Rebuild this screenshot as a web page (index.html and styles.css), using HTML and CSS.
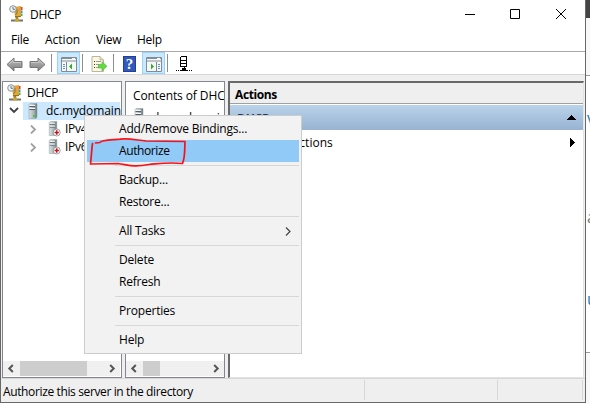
FILE: index.html
```html
<!DOCTYPE html>
<html lang="en">
<head>
<meta charset="utf-8">
<title>DHCP</title>
<link rel="stylesheet" href="styles.css">
</head>
<body>
<svg class="defs" width="0" height="0">
  <defs>
    <linearGradient id="metal" x1="0" x2="1"><stop offset="0" stop-color="#dce3e3"/><stop offset=".6" stop-color="#a9b4b4"/><stop offset="1" stop-color="#66777b"/></linearGradient>
    <linearGradient id="arrow" x1="0" y1="0" x2="0" y2="1"><stop offset="0" stop-color="#bcbcbc"/><stop offset="1" stop-color="#808080"/></linearGradient>
    <symbol id="server" viewBox="0 0 10 16">
      <path d="M1 1.5 2 .5H9V14L8 15.5H1z" fill="url(#metal)" stroke="#8d999b" stroke-width=".5"/>
      <path d="M1.5 3.5H7M1.5 6.5H7" stroke="#536065"/><path d="M1.5 2.5H7M1.5 5.5H7" stroke="#f5f8f8"/>
      <rect x="5" y="12" width="2" height="2" fill="#40cf28"/>
    </symbol>
    <symbol id="dhcp" viewBox="0 0 16 17">
      <path d="M8 12V15M2 15.5H14" stroke="#6c777c" stroke-width="2"/><rect x="6" y="13.5" width="4" height="3" fill="#d7a21b"/>
      <path d="M5 2 12 1V12L6 12.5z" class="book"/><path d="M6 11H12V12L6 12.5z" fill="#947423"/><path d="M8 4V7.5L6.5 10" stroke="#8b7421" fill="none"/>
      <path d="M12.7 2V5" stroke="#e33c2b" stroke-width="1.6"/><path d="M12.7 5.5V8" stroke="#3a94cd" stroke-width="1.6"/><path d="M12.7 8.5V11" stroke="#4baa43" stroke-width="1.6"/>
      <circle cx="4" cy="4" r="3.3" fill="#eef1f2" stroke="#899398"/><path d="M4 2V4.3H6" fill="none" stroke="#505b61" stroke-width=".8"/>
    </symbol>
    <symbol id="back" viewBox="0 0 17 15"><path d="M1 7.5 8 1V4.5H16V10.5H8V14z" fill="url(#arrow)" stroke="#777"/><path d="M3 7.2 7 3.5V5.5H15" fill="none" stroke="#d0d0d0" stroke-width=".8"/></symbol>
    <symbol id="left" viewBox="0 0 8 9"><path d="M5.8 1 2.3 4.5 5.8 8" fill="none" stroke="#555" stroke-width="2"/></symbol>
    <symbol id="right" viewBox="0 0 8 9"><path d="M2.2 1 5.7 4.5 2.2 8" fill="none" stroke="#555" stroke-width="2"/></symbol>
    <symbol id="declined" viewBox="0 0 13 16"><use href="#server" width="10" height="15"/><circle cx="8.7" cy="11.5" r="3.5" fill="#fff" stroke="#888" stroke-width=".8"/><path d="M8.7 9.3V13.7M6.5 11.5H10.9" stroke="#c01824" stroke-width="1.6"/></symbol>
  </defs>
</svg>
<div class="desktop">
  <main class="window">
    <header class="titlebar">
      <svg class="app-icon" width="16" height="17"><use href="#dhcp"/></svg><span>DHCP</span>
      <svg class="controls" width="104" height="12" fill="none" stroke="#000"><path d="M1 6.5H11"/><path d="M46.5 1.5H55.5V10.5H46.5z"/><path d="M92 1 102 11M102 1 92 11"/></svg>
    </header>
    <nav class="menubar"><span class="m-file">File</span><span class="m-action">Action</span><span class="m-view">View</span><span class="m-help">Help</span></nav>
    <div class="toolbar">
      <svg class="back" width="17" height="15"><use href="#back"/></svg>
      <svg class="forward" width="17" height="15"><use href="#back"/></svg>
      <i class="divider d1"></i>
      <span class="tool selected"><svg width="16" height="15"><path d="M.5 .5H15.5V14.5H.5z" fill="#f5f7f8" stroke="#818d94"/><path d="M1 1.5H15M1 4H15" stroke="#849096"/><path d="M11 1.5H14" stroke="#fff"/><path d="M5.5 5V14" stroke="#7d8b92"/><path d="M2 7.5H4M2 9.5H4M2 11.5H4" stroke="#6494b8"/><path d="M11 6.5V12.5L8 9.5z" fill="#2fae23"/></svg></span>
      <i class="divider d2"></i>
      <svg class="export" width="17" height="16"><path d="M1 .5H9L12.5 4V15.5H1z" fill="#fcf7df" stroke="#bdb69e"/><path d="M9 .5V4H12.5" fill="#e8dfbd" stroke="#aaa38b" stroke-width=".7"/><path d="M5 5.5H10M5 8.5H8M5 11.5H8" stroke="#9a9e9a"/><path d="M3 5.5H4M3 8.5H4M3 11.5H4" stroke="#303a36"/><path d="M7.5 8.5H11V5.7L16 10.3 11 15V12H7.5z" fill="#65d844" stroke="#56ba43" stroke-width=".7"/></svg>
      <i class="divider d3"></i>
      <span class="question">?</span>
      <span class="tool selected t2"><svg width="16" height="15"><path d="M.5 .5H15.5V14.5H.5z" fill="#f5f7f8" stroke="#818d94"/><path d="M1 1.5H15M1 4H15" stroke="#849096"/><path d="M11 1.5H14" stroke="#fff"/><path d="M10.5 5V14" stroke="#7d8b92"/><path d="M12 7.5H14M12 9.5H14M12 11.5H14" stroke="#6494b8"/><path d="M5 6.5V12.5L8 9.5z" fill="#2fae23"/></svg></span>
      <i class="divider d4"></i>
      <svg class="network" width="17" height="17" shape-rendering="crispEdges"><path d="M5 1.5H10.5V11.5H4.5V2" fill="#fff" stroke="#000"/><path d="M5 5.5H10M5 8.5H10" stroke="#000"/><path d="M8 12V14M4 15.5H12" stroke="#000"/><path d="M0 15.5H3M13 15.5H17" stroke="#000" stroke-dasharray="1 1"/><path d="M6 13H10V16H6z" fill="#000"/></svg>
    </div>
    <div class="workspace">
      <section class="pane tree">
        <div class="tree-row root"><svg width="16" height="17"><use href="#dhcp"/></svg><span>DHCP</span></div>
        <div class="tree-row node"><svg class="expander" width="10" height="7"><path d="M1 1 5 5 9 1" fill="none" stroke="#404040" stroke-width="1.8"/></svg><div class="node-label"><svg width="10" height="16"><use href="#server"/></svg><span>dc.mydomain</span></div></div>
        <div class="tree-row child"><svg class="expander" width="7" height="9"><path d="M1 .5 5 4.5 1 8.5" fill="none" stroke="#a0a0a0" stroke-width="1.8"/></svg><svg width="13" height="16"><use href="#declined"/></svg><span>IPv4</span></div>
        <div class="tree-row child"><svg class="expander" width="7" height="9"><path d="M1 .5 5 4.5 1 8.5" fill="none" stroke="#a0a0a0" stroke-width="1.8"/></svg><svg width="13" height="16"><use href="#declined"/></svg><span>IPv6</span></div>
        <div class="scrollbar"><svg width="8" height="9"><use href="#left"/></svg><i class="thumb"></i><svg class="end" width="8" height="9"><use href="#right"/></svg></div>
      </section>
      <section class="pane contents">
        <div class="contents-head">Contents of DHC</div>
        <div class="contents-row"><svg width="10" height="16"><use href="#server"/></svg><span>dc.mydomain</span></div>
        <div class="scrollbar"><svg width="8" height="9"><use href="#left"/></svg><i class="thumb short"></i><svg class="end" width="8" height="9"><use href="#right"/></svg></div>
      </section>
      <section class="actions">
        <h2>Actions</h2>
        <div class="group"><span>DHCP</span><svg width="9" height="5" shape-rendering="crispEdges"><path d="M0 5 4.5 0 9 5z"/></svg></div>
        <div class="more"><span>More Actions</span><svg width="5" height="9" shape-rendering="crispEdges"><path d="M0 0 5 4.5 0 9z"/></svg></div>
      </section>
    </div>
    <footer class="status"><span>Authorize this server in the directory</span><i></i><i></i></footer>
  </main>
  <aside class="behind"><div class="dark"></div><div class="pale"></div><div class="page"><span class="v">v</span><span class="a">a</span><span class="u">u</span></div><div class="pale bottom"></div></aside>
  <div class="context-menu">
    <div class="item">Add/Remove Bindings...</div>
    <div class="item active">Authorize</div>
    <hr>
    <div class="item">Backup...</div><div class="item">Restore...</div>
    <hr>
    <div class="item tasks">All Tasks<svg width="6" height="9"><path d="M1 .5 5 4.5 1 8.5" fill="none" stroke="#444" stroke-width="1.2"/></svg></div>
    <hr>
    <div class="item">Delete</div><div class="item">Refresh</div>
    <hr>
    <div class="item">Properties</div>
    <hr>
    <div class="item">Help</div>
  </div>
  <svg class="annotation" width="105" height="40" fill="none" stroke="#fa1018" stroke-width="1.7" stroke-linecap="round" stroke-linejoin="round"><path d="M6.500 8 11 7.500C12 5 23 5 31 4.200C39 3 47 5 57 6L96 6.500C95.500 13 96.500 21 93.500 28.500C79 27 71 28.500 60 29.500C44 32.500 40 30 29 28.500L1.500 29C2.500 21 2.500 15 3.500 8.500"/></svg>
</div>
</body>
</html>
```

FILE: styles.css
```css
* { box-sizing: border-box; }
body { margin: 0; background: #fff; color: #000; font: 12px/18px "Open Sans", "Noto Sans", sans-serif; letter-spacing: -.25px; }
svg { display: block; flex: none; }
.defs { position: absolute; }
.desktop { position: relative; display: flex; width: 590px; height: 404px; overflow: hidden; }
.window { display: flex; flex-direction: column; flex: none; width: 586px; height: 403px; border: solid #686868; border-width: 0 1px 1px; background: #efefef; }
.titlebar { display: flex; height: 30px; padding: 0 17px 0 8px; align-items: center; background: #fff; }
.titlebar span { margin-left: 5px; padding-top: 1px; }
.app-icon { margin-top: -2px; }
.controls { margin-left: auto; margin-top: -2px; }
.book { fill: #e1a638; }
.tree .book { fill: #f0da21; }
.menubar { display: flex; height: 23px; padding: 2px 0 0 10px; border-bottom: 1px solid #a9a9a9; background: #fff; }
.m-file { width: 34px; }
.m-action { width: 51px; letter-spacing: 0; }
.m-view { width: 41px; }
.toolbar { display: flex; align-items: center; height: 23px; padding-left: 5px; background: #fff; border-bottom: 1px solid #d8d8d8; }
.back, .forward { margin-top: 2px; }
.forward { margin-left: 6px; transform: scaleX(-1); }
.divider { width: 1px; height: 18px; background: #8d8d8d; flex: none; }
.d1 { margin: 0 5px; }
.d2 { margin: 0 8px 0 2px; }
.d3 { margin: 0 9px 0 5px; }
.d4 { margin: 0 8px 0 2px; }
.tool { display: flex; align-items: center; justify-content: center; width: 23px; height: 22px; padding-top: 2px; border: 1px solid #99d1ff; background: #cce8ff; flex: none; }
.export { margin-top: 1px; }
.question { width: 13px; height: 16px; margin-top: 1px; color: #fff; background: #3158bc; border: 1px solid #24408e; font: bold 15px/14px "Liberation Serif", serif; text-align: center; letter-spacing: 0; }
.t2 { margin-left: 6px; }
.workspace { display: flex; gap: 3px; height: 303px; padding: 6px 1px 0; }
.pane { display: flex; flex-direction: column; height: 297px; border: 1px solid #828790; background: #fff; overflow: hidden; }
.tree { width: 120px; padding: 1px 1px 1px 0; }
.contents { width: 100px; padding: 1px 0; }
.tree-row { display: flex; align-items: center; height: 18px; flex: none; white-space: nowrap; }
.root { padding-left: 4px; height: 18px; }
.root span { margin-left: 4px; padding-top: 1px; }
.node { padding-left: 6px; height: 19px; }
.node-label { display: flex; align-items: center; width: 97px; height: 18px; padding-left: 5px; margin-left: 4px; background: #cce8ff; letter-spacing: -.1px; }
.node-label span { margin-left: 8px; padding-top: 1px; }
.child { padding-left: 27px; }
.child .expander { margin-right: 11px; }
.child span { margin-left: 4px; }
.scrollbar { display: flex; align-items: center; height: 15px; padding: 0 4px; margin-top: auto; background: #f0f0f0; }
.thumb { width: 67px; height: 15px; margin-left: 5px; background: #cdcdcd; }
.short { width: 17px; }
.end { margin-left: auto; }
.contents-head { height: 25px; padding: 4px 0 0 7px; white-space: nowrap; letter-spacing: -.1px; }
.contents-row { display: flex; align-items: flex-start; gap: 8px; padding-left: 8px; letter-spacing: -.1px; }
.contents-row span { padding-top: 1px; }
.actions { width: 356px; height: 297px; border: solid #696969; border-width: 2px 1px 1px 2px; border-right-color: #e3e3e3; border-bottom-color: #e3e3e3; background: #fff; }
h2 { height: 21px; margin: 0; padding: 3px 5px 0; background: #efefef; border-bottom: 1px solid #a0a0a0; font: bold 12px/18px "Open Sans", sans-serif; letter-spacing: -.4px; }
.group { display: flex; align-items: center; justify-content: space-between; height: 25px; margin-top: 1px; padding: 0 7px; background: linear-gradient(#b9d3eb, #98b3d2); color: #1e395b; font-weight: bold; }
.group span { padding-top: 3px; }
.more { display: flex; align-items: center; justify-content: space-between; height: 24px; padding: 0 8px 0 29px; letter-spacing: 0; }
.more span { padding-top: 1px; }
.status { display: flex; height: 24px; border-top: 1px solid #d7d7d7; padding: 1px 2px; }
.status span { width: 361px; padding-top: 3px; letter-spacing: -.37px; }
.status i { width: 133px; height: 20px; border-left: 1px solid #d7d7d7; }
.status i:last-child { width: 86px; border-right: 1px solid #d7d7d7; }
.behind { width: 4px; overflow: hidden; }
.dark { height: 18px; background: #444; }
.pale { height: 58px; background: #f8f8f8; border-bottom: 1px solid #999; }
.page { position: relative; height: 276px; color: #207bb9; font-size: 16px; }
.v, .a, .u { position: absolute; left: 1px; }
.v { top: 33px; }
.a { top: 132px; color: #777; }
.u { top: 214px; }
.bottom { border-top: 1px solid #999; }
.context-menu { position: absolute; left: 84px; top: 115px; width: 218px; height: 239px; padding: 2px; background: #f2f2f2; border: 1px solid #ccc; letter-spacing: -.2px; }
.item { height: 22px; padding: 1px 0 0 32px; line-height: 20px; }
.active { background: #91c9f7; letter-spacing: -.4px; }
.tasks { display: flex; align-items: center; justify-content: space-between; padding: 0 8px 0 32px; }
.context-menu hr { height: 1px; margin: 3px 0 3px 28px; border: 0; background: #d7d7d7; }
.annotation { position: absolute; left: 89px; top: 135px; }
```
